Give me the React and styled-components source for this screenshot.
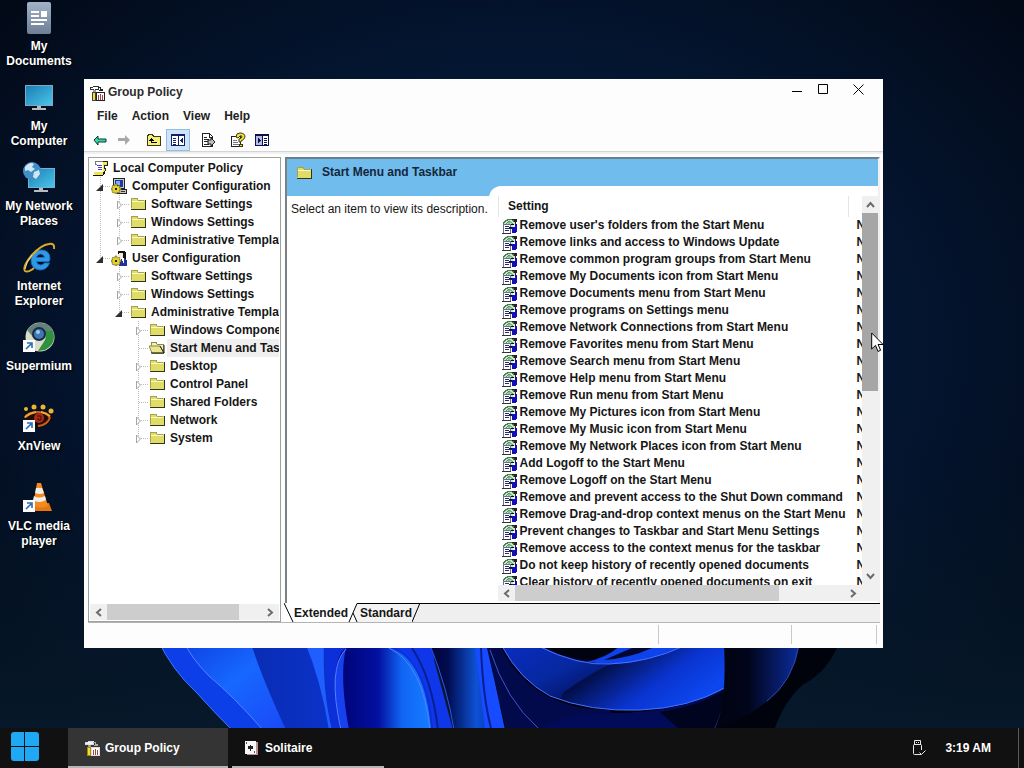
import React, { useState } from 'react'
import styled, { createGlobalStyle, css } from 'styled-components'

const BLUE = '#70bcec'

const GlobalStyle = createGlobalStyle`
  * {
    box-sizing: border-box;
  }
  body {
    margin: 0;
    background: #020b1c;
    color: #161616;
    font: bold 12px/15px "Liberation Sans", Arial, sans-serif;
    overflow: hidden;
  }
  button {
    margin: 0;
    padding: 0;
    border: 0;
    background: none;
    color: inherit;
    font: inherit;
  }
  svg {
    display: block;
    flex: none;
  }
`

const Screen = styled.div`
  position: relative;
  display: flex;
  flex-direction: column;
  height: 100vh;
`
const WallpaperSvg = styled.svg`
  position: absolute;
  inset: 0;
  width: 100%;
  height: 100%;
`
const Desktop = styled.main`
  position: relative;
  flex: 1;
  min-height: 0;
`
const Shortcuts = styled.nav`
  display: flex;
  flex-direction: column;
  width: 78px;
`
const Shortcut = styled.button`
  display: flex;
  flex-direction: column;
  align-items: center;
  gap: 5px;
  height: 80px;
  padding-top: 2px;
  color: #fff;
  text-align: center;
  text-shadow: 1px 1px 2px #000;
`

const Window = styled.section`
  position: absolute;
  left: 84px;
  top: 79px;
  right: 141px;
  bottom: 80px;
  display: flex;
  flex-direction: column;
  background: #fdfdfd;
`
const TitleBar = styled.header`
  display: flex;
  align-items: center;
  height: 25px;
  padding: 2px 7px 0 5px;
  gap: 3px;
  color: #2b2b2b;
  h1 {
    flex: 1;
    margin: 0;
    font: inherit;
  }
`
const Controls = styled.div`
  display: flex;
  margin-top: -6px;
`
const ControlButton = styled.button`
  display: flex;
  align-items: center;
  justify-content: center;
  width: ${(p) => (p.$wide ? 36 : 26)}px;
  height: 20px;
  margin-left: ${(p) => (p.$wide ? 4 : 0)}px;
`
const MenuBar = styled.nav`
  display: flex;
  gap: 14px;
  height: 24px;
  padding-left: 13px;
  color: #222;
`
const Toolbar = styled.div`
  display: flex;
  align-items: center;
  height: 24px;
  padding-left: 4px;
  border-bottom: 1px solid #d5d5d5;
`
const ToolButton = styled.button`
  display: flex;
  align-items: center;
  justify-content: center;
  width: 24px;
  height: 22px;
  margin-left: ${(p) => (p.$gap ? p.$gap : 0)}px;
  border: 1px solid ${(p) => (p.$on ? '#8fbfe8' : 'transparent')};
  background: ${(p) => (p.$on ? '#cde4f8' : 'none')};
`
const Panes = styled.div`
  display: grid;
  grid-template-columns: 193px 1fr;
  grid-template-rows: minmax(0, 1fr);
  gap: 4px;
  flex: 1;
  min-height: 0;
  padding: 5px 3px 0 4px;
  background: linear-gradient(#f0f0f0 2px, #fdfdfd 2px);
`
const TreePane = styled.div`
  display: flex;
  flex-direction: column;
  min-width: 0;
  padding: 1px;
  border: 1px solid #9aa39c;
  background: #fff;
`
const TreeList = styled.ul`
  flex: 1;
  min-height: 0;
  margin: 0;
  padding: 0 0 0 2px;
  overflow: hidden;
  list-style: none;
`
const TreeRow = styled.li`
  display: flex;
  align-items: center;
  height: 18px;
  white-space: nowrap;
`
const TreeLabel = styled.span`
  flex: 1 0 auto;
  margin-left: 2px;
  padding: 2px 0 1px 3px;
  background: ${(p) => (p.$selected ? '#efefef' : 'none')};
`
const Gutter = styled.span`
  flex: none;
  width: 19px;
  height: 18px;
`

const HBar = styled.div`
  display: flex;
  height: 16px;
  background: #f0f0f0;
`
const VBar = styled.div`
  display: flex;
  flex-direction: column;
  width: 16px;
  background: #f0f0f0;
`
const ScrollButton = styled.button`
  display: flex;
  align-items: center;
  justify-content: center;
  flex: none;
  width: ${(p) => (p.$vertical ? 16 : 17)}px;
  height: ${(p) => (p.$vertical ? 17 : 16)}px;
`
const Track = styled.div`
  flex: 1;
  min-height: 0;
`
const Thumb = styled.div`
  ${(p) =>
    p.$vertical
      ? css`
          height: ${p.$size}%;
          background: #a6a6a6;
        `
      : css`
          width: ${p.$size}%;
          height: 100%;
          background: #cdcdcd;
        `}
`

const RightPane = styled.div`
  display: flex;
  flex-direction: column;
  min-width: 0;
  min-height: 0;
`
const View = styled.div`
  display: flex;
  flex-direction: column;
  flex: 1;
  min-height: 0;
  border-top: 2px solid #697f90;
  border-left: 2px solid #7b7f86;
  border-right: 2px solid #f0f0f0;
`
const Banner = styled.div`
  display: flex;
  flex: none;
  align-items: center;
  gap: 10px;
  height: 27px;
  padding-left: 9px;
  background: ${BLUE};
  color: #14273c;
`
const Body = styled.div`
  display: grid;
  grid-template-columns: 202px 1fr;
  grid-template-rows: minmax(0, 1fr);
  flex: 1;
  min-height: 0;
  background: linear-gradient(${BLUE} 10px, #fff 10px);
`
const Description = styled.p`
  margin: 0;
  padding: 16px 0 0 4px;
  font-weight: normal;
  white-space: nowrap;
`
const ListPanel = styled.div`
  display: flex;
  flex-direction: column;
  min-width: 0;
  min-height: 0;
  padding: 10px 0 2px 9px;
  border-top-left-radius: 12px;
  background: #fff;
`
const ListArea = styled.div`
  display: flex;
  flex: 1;
  min-height: 0;
`
const ListClip = styled.div`
  flex: 1;
  min-width: 0;
  overflow: hidden;
`
const SettingsTable = styled.table`
  width: 440px;
  table-layout: fixed;
  border-collapse: collapse;
  white-space: nowrap;
  th {
    height: 21px;
    padding: 0 0 0 9px;
    border-left: 1px solid #e5e5e5;
    font-weight: bold;
    text-align: left;
  }
  th:first-child {
    width: 350px;
  }
  td {
    height: 17px;
    padding: 0 0 0 8px;
  }
  td:first-child {
    padding-left: 3px;
  }
`
const SettingName = styled.div`
  display: flex;
  align-items: center;
  gap: 2px;
  height: 17px;
`
const HBarRow = styled.div`
  display: flex;
  padding-right: 16px;
  background: #f0f0f0;
  > div {
    flex: 1;
  }
`
const TabBar = styled.div`
  display: flex;
  flex: none;
  height: 19px;
  margin-left: -1px;
  background: #fff;
`
const Tab = styled.button`
  height: 19px;
  border-top: 1px solid ${(p) => (p.$active ? '#fff' : '#000')};
  background: ${(p) => (p.$active ? '#fff' : '#f3f3f3')};
`
const TabFill = styled.div`
  flex: 1;
  height: 19px;
  border-top: 1px solid #000;
  background: #efefef;
`
const StatusBar = styled.footer`
  display: flex;
  flex: none;
  height: 26px;
  margin: 0 3px 0 4px;
  padding: 2px 3px 4px 0;
  border-top: 1px solid #b4b4b4;
`
const StatusCell = styled.div`
  flex: ${(p) => (p.$width ? 'none' : '1')};
  width: ${(p) => (p.$width ? p.$width + 'px' : 'auto')};
  border-right: 1px solid #c9c9c9;
`

const Taskbar = styled.footer`
  position: relative;
  display: flex;
  height: 40px;
  background: #111;
  color: #fff;
`
const StartButton = styled.button`
  width: 68px;
  padding: 0 0 3px 11px;
`
const Task = styled.button`
  display: flex;
  align-items: center;
  gap: 5px;
  width: ${(p) => (p.$active ? 160 : 152)}px;
  margin-right: 4px;
  padding-top: 2px;
  padding-left: ${(p) => (p.$active ? 16 : 12)}px;
  border-bottom: 2px solid #b5b5b5;
  background: ${(p) => (p.$active ? '#343434' : 'none')};
`
const Tray = styled.div`
  display: flex;
  align-items: center;
  gap: 19px;
  margin-left: auto;
  padding-right: 27px;
`
const ShowDesktop = styled.button`
  width: 6px;
  border-left: 1px solid #5a5a5a;
`
const PointerSvg = styled.svg`
  position: absolute;
  left: 871px;
  top: 332px;
`

// gutters: v = line, t = branch, e = last branch, blank = empty
// state: open | closed | none
const tree = [
  { label: 'Local Computer Policy', icon: 'scroll', gutters: '' },
  { label: 'Computer Configuration', icon: 'computer', gutters: 't', state: 'open' },
  { label: 'Software Settings', gutters: 'vt', state: 'closed' },
  { label: 'Windows Settings', gutters: 'vt', state: 'closed' },
  { label: 'Administrative Templates', gutters: 've', state: 'closed' },
  { label: 'User Configuration', icon: 'user', gutters: 'e', state: 'open' },
  { label: 'Software Settings', gutters: ' t', state: 'closed' },
  { label: 'Windows Settings', gutters: ' t', state: 'closed' },
  { label: 'Administrative Templates', gutters: ' e', state: 'open' },
  { label: 'Windows Components', gutters: '  t', state: 'closed' },
  { label: 'Start Menu and Taskbar', icon: 'openFolder', gutters: '  t' },
  { label: 'Desktop', gutters: '  t', state: 'closed' },
  { label: 'Control Panel', gutters: '  t', state: 'closed' },
  { label: 'Shared Folders', gutters: '  t' },
  { label: 'Network', gutters: '  t', state: 'closed' },
  { label: 'System', gutters: '  e', state: 'closed' },
]

const settings = [
  "Remove user's folders from the Start Menu",
  'Remove links and access to Windows Update',
  'Remove common program groups from Start Menu',
  'Remove My Documents icon from Start Menu',
  'Remove Documents menu from Start Menu',
  'Remove programs on Settings menu',
  'Remove Network Connections from Start Menu',
  'Remove Favorites menu from Start Menu',
  'Remove Search menu from Start Menu',
  'Remove Help menu from Start Menu',
  'Remove Run menu from Start Menu',
  'Remove My Pictures icon from Start Menu',
  'Remove My Music icon from Start Menu',
  'Remove My Network Places icon from Start Menu',
  'Add Logoff to the Start Menu',
  'Remove Logoff on the Start Menu',
  'Remove and prevent access to the Shut Down command',
  'Remove Drag-and-drop context menus on the Start Menu',
  'Prevent changes to Taskbar and Start Menu Settings',
  'Remove access to the context menus for the taskbar',
  'Do not keep history of recently opened documents',
  'Clear history of recently opened documents on exit',
]

const Icon16 = ({ children }) => (
  <svg width="16" height="16" viewBox="0 0 16 16" shapeRendering="crispEdges" aria-hidden="true">
    {children}
  </svg>
)

const FolderIcon = () => (
  <Icon16>
    <path d="M1 4l1-2h5l1 2h7v9H1z" fill="#e0dc68" />
    <path d="M1 12V4l1-2h5l1 2h6" fill="none" stroke="#a5a24a" />
    <path d="M2 5h12" stroke="#fbf9c4" />
    <path d="M15 4v9H1" fill="none" stroke="#33331a" />
  </Icon16>
)
const OpenFolderIcon = () => (
  <Icon16>
    <path d="M2 4l1-2h4l1 2h6v9H3z" fill="#f4f1b5" stroke="#8d8a45" />
    <path d="M0 6h11l4 7H3z" fill="#e9e590" stroke="#8d8a45" shapeRendering="auto" />
    <path d="M11 6l4 7V5M2 13h13" fill="none" stroke="#222" shapeRendering="auto" />
  </Icon16>
)
const ScrollIcon = () => (
  <Icon16>
    <path d="M4 2h9v3h-1v8H4z" fill="#fff" />
    <path d="M3 1h9M3 1v3h2" stroke="#777" fill="none" />
    <path d="M5 5h5M6 7h4M6 9h4" stroke="#4a3fc8" />
    <path d="M11 1h4v4h-3v3h1v3l-2 2" fill="#f1e53d" stroke="#222" />
    <path d="M12 2h2v2h-2zM11 6h1v6h-1z" fill="#f7ee4a" />
    <path d="M2 12h8l2 1-2 2H3z" fill="#f1e53d" />
    <path d="M1 15h10l2-3" fill="none" stroke="#111" />
  </Icon16>
)
const Gear = () => (
  <>
    <path
      d="M4 6h2v2h1l1-1 1 1-1 2h2v2H8l1 2-1 1-2-1v2H4v-2l-2 1-1-1 1-2H0v-2h2L1 8l1-1 2 1z"
      fill="#e8d62e"
      stroke="#4a430c"
      strokeWidth="0.500"
      shapeRendering="auto"
    />
    <path d="M4 10h2v2H4z" fill="#222" />
  </>
)
const ComputerIcon = () => (
  <Icon16>
    <path d="M2 0h12v11H2z" fill="#222" />
    <path d="M3 1h10v9H3z" fill="#cfcbc2" />
    <path d="M4 2h8v7H4z" fill="#1f36b0" />
    <path d="M5 3h4v4H5z" fill="#7eb0ee" />
    <path d="M5 11h11v5H5z" fill="#222" />
    <path d="M6 12h9v3H6z" fill="#c9c5bb" />
    <path d="M10 13h4v1h-4z" fill="#333" />
    <Gear />
  </Icon16>
)
const UserIcon = () => (
  <Icon16>
    <path d="M7 1h6l2 2v6h-3L7 6z" fill="#111" />
    <path d="M8 3h4v5H9L7 6z" fill="#f8ead2" />
    <path d="M10 9l4-1 2 3v5H8z" fill="#22319a" />
    <path d="M11 8h2v5h-1z" fill="#fff" />
    <Gear />
  </Icon16>
)
const PolicyIcon = () => (
  <Icon16>
    <path d="M4 1h7l3 3v5H2V3z" fill="#cfe6cd" />
    <path d="M1 6V4h1V3h1V2h2V1h5v1h1v1h1v1" fill="none" stroke="#52795a" />
    <path d="M10 1h4v1h-2v1h3M13 3v3" fill="none" stroke="#222" />
    <path d="M4 6l3-3 4 3M7 3v4" fill="none" stroke="#3e9b53" shapeRendering="auto" />
    <path d="M1 6h8v10H1z" fill="#6c7191" />
    <path d="M2 7h6v8H2z" fill="#fff" />
    <path d="M3 8h4v1H3zM3 10h5v1H3zM3 12h4v1H3z" fill="#262b6a" />
    <path d="M0 15h9v1H0z" fill="#333" />
    <path d="M8 9h3V8h2V6h2v8h-1v1h-4v-4H8z" fill="#1010b4" />
    <path d="M7 9h3v1H7zM9 6h3v1H9z" fill="#111" />
    <path d="M11 7h2v2h-2z" fill="#fff" />
  </Icon16>
)
const GroupPolicyIcon = ({ dark }) => (
  <Icon16>
    <path d="M1 2h3l1-1h4v3H6v1H4V4H1z" fill={dark ? '#f2f2f2' : '#fff'} stroke={dark ? '#ddd' : '#333'} />
    <path d="M9 2h2v2h2v1h-3" fill="none" stroke={dark ? '#aaa' : '#222'} />
    <path d="M4 5h3v4H4z" fill="#999" />
    <path d="M3 7h4v9H3z" fill={dark ? '#a08c10' : '#444'} />
    <path d="M4 8h2v7H4z" fill="#f4de2c" />
    <path d="M7 7h9v9H7z" fill={dark ? '#ddd' : '#222'} />
    <path d="M8 8h7v7H8z" fill="#fff" />
    <path d="M9 10h1v5H9zM11 9h1v6h-1zM13 10h1v5h-1z" fill="#a0453e" />
  </Icon16>
)

const treeIcons = {
  scroll: ScrollIcon,
  computer: ComputerIcon,
  user: UserIcon,
  openFolder: OpenFolderIcon,
}

const Branch = ({ type, state }) => (
  <Gutter>
    {type !== ' ' && (
      <svg width="19" height="18" viewBox="0 0 19 18" aria-hidden="true">
        <path d={`M8.500 0V${type === 'e' ? 9 : 18}`} stroke="#bdbdbd" strokeDasharray="1 1" />
        {type !== 'v' && <path d="M9 9.500H18" stroke="#bdbdbd" strokeDasharray="1 1" />}
        {state === 'open' && <path d="M11 7v7H4z" fill="#2f2f2f" />}
        {state === 'closed' && <path d="M6.500 6v8l4-4z" fill="#fff" stroke="#a5a5a5" />}
      </svg>
    )}
  </Gutter>
)

const Tree = () => {
  const [selected, setSelected] = useState(10)
  return (
    <TreeList>
      {tree.map((node, i) => {
        const NodeIcon = treeIcons[node.icon] || FolderIcon
        const last = node.gutters.length - 1
        return (
          <TreeRow key={i} onClick={() => setSelected(i)}>
            {node.gutters.split('').map((type, g) => (
              <Branch key={g} type={type} state={g === last ? node.state : ''} />
            ))}
            <NodeIcon />
            <TreeLabel $selected={selected === i}>{node.label}</TreeLabel>
          </TreeRow>
        )
      })}
    </TreeList>
  )
}

const arrows = {
  left: 'M7 1L3 4.500L7 8',
  right: 'M2 1L6 4.500L2 8',
  up: 'M1 7L4.500 3L8 7',
  down: 'M1 2L4.500 6L8 2',
}
const ScrollArrow = ({ dir }) => (
  <ScrollButton $vertical={dir === 'up' || dir === 'down'} aria-label={'Scroll ' + dir}>
    <svg width="9" height="9" viewBox="0 0 9 9">
      <path d={arrows[dir]} fill="none" stroke="#6b6b6b" strokeWidth="2" />
    </svg>
  </ScrollButton>
)
const HScroll = ({ size }) => (
  <HBar>
    <ScrollArrow dir="left" />
    <Track>
      <Thumb $size={size} />
    </Track>
    <ScrollArrow dir="right" />
  </HBar>
)

const Badge = () => (
  <>
    <path d="M0 18h12v12H0z" fill="#fbfbfb" />
    <path d="M3 27l5-5M4 21h5v5" fill="none" stroke="#2a6bb5" strokeWidth="1.600" />
  </>
)
const Icon32 = ({ children }) => (
  <svg width="32" height="32" viewBox="0 0 32 32" aria-hidden="true">
    {children}
  </svg>
)

const shortcuts = [
  {
    label: ['My', 'Documents'],
    art: (
      <>
        <rect x="4" y="0" width="24" height="32" rx="2" fill="url(#docFill)" />
        <path d="M8 10h8M8 14h8M8 18h16M8 22h13" stroke="#fff" strokeWidth="2" />
        <path d="M18 9h6v6h-6z" fill="#fff" />
      </>
    ),
  },
  {
    label: ['My', 'Computer'],
    art: (
      <>
        <path d="M2 3h28v21H2z" fill="#7fa9c0" />
        <path d="M3 4h26v19H3z" fill="url(#screenFill)" />
        <path d="M14 24h4v2h5v2H9v-2h5z" fill="#b6bcc2" />
      </>
    ),
  },
  {
    label: ['My Network', 'Places'],
    art: (
      <>
        <path d="M5 6h27v20H5z" fill="#6fb4d4" />
        <path d="M6 7h25v18H6z" fill="url(#screenFill)" />
        <path d="M16 26h4v2h5v2H11v-2h5z" fill="#b6bcc2" />
        <circle cx="9" cy="9" r="9" fill="#3f8fc6" />
        <path d="M2 5q5-6 9-3l-2 3 3 2-4 3-3-2-3 1zM11 10l5-2 1 4-4 5-3-2z" fill="#cfe7f2" />
      </>
    ),
  },
  {
    label: ['Internet', 'Explorer'],
    art: (
      <>
        <path
          d="M26 19.500H13.500Q14 23 17.500 23q2.500 0 4-2h5Q24 28 17 28q-9-1-9-10Q9 8 18 8q9 0 9 9zM13.500 15.500h8Q21 12 17.500 12t-4 3.500z"
          fill="#2e9ae6"
          stroke="#1a6ec4"
        />
        <path d="M31 7Q32 1 26 2 18 3 9 13-1 25 2 29q3 2 9-3" fill="none" stroke="#d9a92a" strokeWidth="2" />
        <path d="M9 13Q3 20 2 27" fill="none" stroke="#f6e08a" />
      </>
    ),
  },
  {
    label: ['Supermium'],
    art: (
      <>
        <circle cx="17" cy="15" r="14.500" fill="#dcdccd" />
        <path d="M4 8Q10 0 18 1q9 0 12 8l-13 1q-5 0-7 5z" fill="#648279" />
        <path d="M30 9q4 13-8 19l-7 1 7-11q2-5-2-9z" fill="#2f913c" />
        <path d="M4 8l6 9q3 5 8 4l-4 8Q3 27 3 16z" fill="#d9dfc7" />
        <circle cx="16" cy="12" r="7" fill="#1a2b45" />
        <circle cx="16" cy="12" r="5" fill="#3d79b5" />
        <circle cx="15" cy="10" r="2" fill="#a4cbe8" />
        <Badge />
      </>
    ),
  },
  {
    label: ['XnView'],
    art: (
      <>
        <g fill="#eeb52e">
          <circle cx="3" cy="7" r="2" />
          <circle cx="11" cy="5" r="2.500" />
          <circle cx="20" cy="5" r="2.500" />
          <circle cx="28" cy="9" r="2.500" />
        </g>
        <path d="M3 15q13-9 26 0-4 10-14 10Q7 24 3 15z" fill="#260a05" />
        <path d="M2 16q2-6 13-6 9 0 12 6M27 15q-2 8-12 9" fill="none" stroke="#ce5f19" strokeWidth="2" />
        <path d="M2 15q5-4 11-5M18 10q5 1 9 4" fill="none" stroke="#f3a42c" strokeWidth="2" />
        <circle cx="16" cy="16" r="5" fill="#a82c1a" />
        <path d="M14 14h4v4h-3v-2" fill="none" stroke="#3b0c07" />
        <Badge />
      </>
    ),
  },
  {
    label: ['VLC media', 'player'],
    art: (
      <>
        <path d="M7 22l19-1 3 8H9z" fill="#e8760f" />
        <path d="M14 1h4l7 23q-8 4-15-1z" fill="#f48a1c" />
        <path d="M13 6h6l2 5q-4 2-9 0zM11 14q5 3 11 0l1 4q-7 4-13 0z" fill="#f0efec" />
        <Badge />
      </>
    ),
  },
]

const Wallpaper = () => (
  <WallpaperSvg viewBox="0 0 1024 768" preserveAspectRatio="xMidYMax slice" aria-hidden="true">
    <defs>
      <radialGradient id="sky" cx="0.500" cy="0.450" r="0.650">
        <stop offset="0" stopColor="#0a2143" />
        <stop offset="0.600" stopColor="#041530" />
        <stop offset="1" stopColor="#020a18" />
      </radialGradient>
      <linearGradient id="ground" x1="0" y1="0" x2="0" y2="1">
        <stop offset="0.600" stopColor="#071a2c" stopOpacity="0" />
        <stop offset="1" stopColor="#071a2c" />
      </linearGradient>
      <linearGradient id="docFill" x1="0" y1="0" x2="0" y2="1">
        <stop offset="0" stopColor="#a3b3c6" />
        <stop offset="1" stopColor="#6e7f96" />
      </linearGradient>
      <linearGradient id="screenFill" x1="0" y1="0" x2="1" y2="1">
        <stop offset="0" stopColor="#1a7fb5" />
        <stop offset="1" stopColor="#4cc3ea" />
      </linearGradient>
      <linearGradient id="petalA" x1="0" y1="0" x2="1" y2="0.600">
        <stop offset="0" stopColor="#0b37dc" />
        <stop offset="0.500" stopColor="#1767ff" />
        <stop offset="1" stopColor="#1b46f5" />
      </linearGradient>
      <linearGradient id="petalB" x1="0" y1="0" x2="1" y2="0">
        <stop offset="0" stopColor="#0a2cb4" />
        <stop offset="1" stopColor="#0b34cc" />
      </linearGradient>
      <linearGradient id="loop" x1="0" y1="0" x2="1" y2="0">
        <stop offset="0.100" stopColor="#00057c" />
        <stop offset="0.450" stopColor="#0310a0" />
        <stop offset="0.700" stopColor="#1166f4" />
        <stop offset="1" stopColor="#157cff" />
      </linearGradient>
      <linearGradient id="shade" x1="0" y1="0" x2="1" y2="0">
        <stop offset="0" stopColor="#02043a" />
        <stop offset="0.300" stopColor="#020b4e" />
        <stop offset="0.800" stopColor="#0d52d4" />
        <stop offset="1" stopColor="#0a3cc0" />
      </linearGradient>
      <linearGradient id="sweep" x1="0" y1="0" x2="1" y2="0.300">
        <stop offset="0" stopColor="#000530" />
        <stop offset="0.350" stopColor="#010628" />
        <stop offset="0.650" stopColor="#0a34d0" />
        <stop offset="0.850" stopColor="#0c48f0" />
        <stop offset="1" stopColor="#0525a8" />
      </linearGradient>
      <linearGradient id="rim" x1="0" y1="0" x2="1" y2="1">
        <stop offset="0" stopColor="#0a2cc0" />
        <stop offset="0.500" stopColor="#0628a0" />
        <stop offset="1" stopColor="#030a48" />
      </linearGradient>
      <linearGradient id="tail" x1="0" y1="0" x2="1" y2="0">
        <stop offset="0" stopColor="#01030f" />
        <stop offset="0.400" stopColor="#01051c" />
        <stop offset="1" stopColor="#0b2c9c" />
      </linearGradient>
    </defs>
    <path d="M0 0h1024v768H0z" fill="url(#sky)" />
    <path d="M0 0h1024v768H0z" fill="url(#ground)" />
    <path d="M500 640h340q-10 30-36 44-18 14-30 46H500z" fill="#01030c" />
    <path d="M158 640q14 30 38 52 18 20 36 38h110V640z" fill="url(#petalA)" />
    <path d="M158 640q14 30 38 52 18 20 36 38h31q-30-34-54-54-18-18-26-36z" fill="#0c3fe8" />
    <path d="M183 640q8 18 26 36 24 20 54 54" fill="none" stroke="#4c86ff" />
    <path d="M158 640q14 30 38 52 18 20 36 38" fill="none" stroke="#3f74ff" />
    <path d="M250 640q10 34 36 90h60V640z" fill="url(#petalB)" />
    <path d="M304 640h20q-2 50 8 90h-3q-8-50-25-90z" fill="#1f5fff" />
    <path d="M324 640h110v90H332q-6-40-8-90z" fill="#0b2fd8" />
    <path d="M348 730q-18-42-11-66 3-14 10-16h44q34 12 40 82z" fill="url(#loop)" />
    <path d="M346 648q-7 28 3 82h-7q-16-60 4-82z" fill="#1740ee" />
    <path d="M341 730q-14-62 5-81M389 648q34 16 41 82" fill="none" stroke="#5580ff" />
    <path d="M392 645h38l23 85h-20q-4-66-41-85z" fill="#0f36e8" />
    <path d="M412 648q20 30 26 82" fill="none" stroke="#062094" strokeWidth="2" />
    <path d="M430 645h50l8 85h-34q-6-40-24-85z" fill="url(#shade)" />
    <path d="M430 645q18 45 24 85" fill="none" stroke="#2a55e8" />
    <path d="M475 645h12l18 85h-20z" fill="#174bff" />
    <path d="M481 648q2 50 10 80" fill="none" stroke="#0a1f8f" strokeWidth="2" />
    <path d="M487 648h14q32 62 110 62v20H506z" fill="#020a4c" />
    <path d="M490 650q16 50 48 78" fill="none" stroke="#3d55c8" />
    <path d="M500 645q20 34 50 51 40 16 90 14 50-2 86-22l70-43z" fill="url(#sweep)" />
    <path d="M502 645h38q30 18 70 19-20 10-46 28l-4 8q-40-15-58-55z" fill="url(#rim)" />
    <path d="M545 648q30 14 62 12l24-12z" fill="#010310" />
    <path d="M586 662q20-4 34-16h64q-40 18-74 18z" fill="#0e43ec" />
    <path d="M604 660q26-2 48-12h-20z" fill="#01072e" />
    <path d="M502 646q18 34 48 50 40 16 90 14 50-2 84-22M538 646q40 20 72 18 40-2 74-18" fill="none" stroke="#4a6fff" />
    <path d="M540 730q20-16 70-17 70 0 116-24-4 26-12 41z" fill="#020b58" />
    <path d="M660 712q40-6 64-22 2 20-10 40h-34z" fill="#01041e" />
    <path d="M726 688q-2 22-12 42" fill="none" stroke="#2844b4" />
    <path d="M724 645h75q-6 36-32 56-20 18-52 27 12-24 9-83z" fill="url(#tail)" />
    <path d="M799 645q-6 36-32 56" fill="none" stroke="#3248b0" />
  </WallpaperSvg>
)

const App = () => {
  const [tab, setTab] = useState('Extended')
  return (
    <Screen>
      <GlobalStyle />
      <Wallpaper />
      <Desktop>
        <Shortcuts>
          {shortcuts.map((s) => (
            <Shortcut key={s.label.join(' ')}>
              <Icon32>{s.art}</Icon32>
              <span>
                {s.label[0]}
                {s.label[1] && <br />}
                {s.label[1]}
              </span>
            </Shortcut>
          ))}
        </Shortcuts>
        <Window>
          <TitleBar>
            <GroupPolicyIcon />
            <h1>Group Policy</h1>
            <Controls>
              <ControlButton aria-label="Minimize">
                <svg width="11" height="11" viewBox="0 0 11 11">
                  <path d="M0 7.500h10" stroke="#000" />
                </svg>
              </ControlButton>
              <ControlButton aria-label="Maximize">
                <svg width="11" height="11" viewBox="0 0 11 11">
                  <path d="M.500 .500h9v9h-9z" fill="none" stroke="#000" />
                </svg>
              </ControlButton>
              <ControlButton $wide aria-label="Close">
                <svg width="11" height="11" viewBox="0 0 11 11">
                  <path d="M.500 .500l10 10M10.500 .500l-10 10" stroke="#000" />
                </svg>
              </ControlButton>
            </Controls>
          </TitleBar>
          <MenuBar>
            {['File', 'Action', 'View', 'Help'].map((m) => (
              <button key={m}>{m}</button>
            ))}
          </MenuBar>
          <Toolbar>
            <ToolButton aria-label="Back">
              <Icon16>
                <path d="M2 8l4-4v3h8v3H6v3z" fill="#35d6a0" stroke="#0b3b36" shapeRendering="auto" />
              </Icon16>
            </ToolButton>
            <ToolButton aria-label="Forward">
              <Icon16>
                <path d="M14 8l-5-5v3H2v3h7v4z" fill="#a8a8a8" shapeRendering="auto" />
              </Icon16>
            </ToolButton>
            <ToolButton $gap={6} aria-label="Up one level">
              <Icon16>
                <path d="M1.500 4.500l1-2h4l1 2h7v9h-13z" fill="#f5f078" stroke="#3c3a12" />
                <path d="M5 10h6v1H5zM5 6h1v5H5zM4 7h3v1H4zM3 8h5v1H3z" fill="#000" />
              </Icon16>
            </ToolButton>
            <ToolButton $on aria-label="Show tree">
              <Icon16>
                <path d="M1.500 2.500h13v11h-13z" fill="#fff" stroke="#10206a" />
                <path d="M1 3h14" stroke="#10206a" strokeWidth="2" />
                <path d="M8 3v11" stroke="#10206a" />
                <path d="M3 6h3M3 8h3M3 10h3M3 12h3" stroke="#10206a" />
                <path d="M13 6v5l-3-2.500z" fill="#10206a" />
              </Icon16>
            </ToolButton>
            <ToolButton $gap={6} aria-label="Export list">
              <Icon16>
                <path d="M2.500 1.500h7l3 3v10h-10z" fill="#fff" stroke="#222" />
                <path d="M9 1v4h4M4 5h3M4 7h5M4 9h4M4 12h5" fill="none" stroke="#222" />
                <path d="M8 8h3V6l4 4-4 4v-2H8z" fill="#bbb" stroke="#222" shapeRendering="auto" />
              </Icon16>
            </ToolButton>
            <ToolButton $gap={6} aria-label="Help">
              <Icon16>
                <path d="M1.500 4.500h9v10h-9z" fill="#fff" stroke="#222" />
                <path d="M3 8h4M3 10h5M3 12h6" stroke="#777" />
                <path d="M6 5q0-4 4-4 5 0 5 4-1 3-4 4v1H9V7q3-1 3-2 0-2-2-1L8 6z" fill="#f2e53c" stroke="#3b370c" shapeRendering="auto" />
                <path d="M9 12h3v2H9z" fill="#f2e53c" stroke="#3b370c" />
              </Icon16>
            </ToolButton>
            <ToolButton aria-label="Show action pane">
              <Icon16>
                <path d="M1.500 2.500h13v11h-13z" fill="#fff" stroke="#10104a" />
                <path d="M1 3h14" stroke="#10104a" strokeWidth="2" />
                <path d="M2 4h6v9H2z" fill="#b4bce4" />
                <path d="M8 3v11M10 6h3M10 8h3M10 10h3M10 12h3" stroke="#10104a" />
                <path d="M4 6v5l3-2.500z" fill="#10104a" />
              </Icon16>
            </ToolButton>
          </Toolbar>
          <Panes>
            <TreePane>
              <Tree />
              <HScroll size={85} />
            </TreePane>
            <RightPane>
              <View>
                <Banner>
                  <FolderIcon />
                  Start Menu and Taskbar
                </Banner>
                <Body>
                  <Description>Select an item to view its description.</Description>
                  <ListPanel>
                    <ListArea>
                      <ListClip>
                        <SettingsTable>
                          <thead>
                            <tr>
                              <th scope="col">Setting</th>
                              <th scope="col" />
                            </tr>
                          </thead>
                          <tbody>
                            {settings.map((name) => (
                              <tr key={name}>
                                <td>
                                  <SettingName>
                                    <PolicyIcon />
                                    {name}
                                  </SettingName>
                                </td>
                                <td>Not configured</td>
                              </tr>
                            ))}
                          </tbody>
                        </SettingsTable>
                      </ListClip>
                      <VBar>
                        <ScrollArrow dir="up" />
                        <Track>
                          <Thumb $vertical $size={50} />
                        </Track>
                        <ScrollArrow dir="down" />
                      </VBar>
                    </ListArea>
                    <HBarRow>
                      <HScroll size={80} />
                    </HBarRow>
                  </ListPanel>
                </Body>
              </View>
              <TabBar>
                <svg width="10" height="19" viewBox="0 0 10 19">
                  <path d="M0 0l9 19" stroke="#000" />
                </svg>
                <Tab $active={tab === 'Extended'} onClick={() => setTab('Extended')}>
                  Extended
                </Tab>
                <svg width="12" height="19" viewBox="0 0 12 19">
                  <path d="M9.500 0H12v19H8.500L5 10z" fill="#f3f3f3" />
                  <path d="M1 19L9 .500H12M5 10l4 9" fill="none" stroke="#000" />
                </svg>
                <Tab $active={tab === 'Standard'} onClick={() => setTab('Standard')}>
                  Standard
                </Tab>
                <svg width="9" height="19" viewBox="0 0 9 19">
                  <path d="M0 0h9v19H0z" fill="#efefef" />
                  <path d="M0 .500h9M0 19L8 0" stroke="#000" />
                </svg>
                <TabFill />
              </TabBar>
            </RightPane>
          </Panes>
          <StatusBar>
            <StatusCell />
            <StatusCell $width={133} />
            <StatusCell $width={85} />
          </StatusBar>
        </Window>
      </Desktop>
      <Taskbar>
        <StartButton aria-label="Start">
          <svg width="28" height="29" viewBox="0 0 28 29">
            <path d="M3 0h10v14H0V3q0-3 3-3zM14 0h11q3 0 3 3v11H14zM0 15h13v14H3q-3 0-3-3zM14 15h14v11q0 3-3 3H14z" fill="#1fa9f4" />
          </svg>
        </StartButton>
        <Task $active>
          <GroupPolicyIcon dark />
          Group Policy
        </Task>
        <Task>
          <Icon16>
            <path d="M3 2h11v13H3z" fill="#b98f92" />
            <path d="M1 1h11v13H1z" fill="#f7f7f7" />
            <path d="M6 5h1v1h2v3H7v2H6V9H4V6h2z" fill="#222" />
            <path d="M2 2h1v2H2zM10 11h1v2h-1z" fill="#a33" />
          </Icon16>
          Solitaire
        </Task>
        <Tray>
          <svg width="14" height="16" viewBox="0 0 14 16" fill="none" stroke="#e8e8e8">
            <path d="M2.500 5V.500h6V5M9 14.500H2.500q-1 0-1-1v-8q0-1 1-1h6q1 0 1 1V10M4 2.500h1M6 2.500h1M7.500 12.500l2 2 4-4" />
          </svg>
          <span>3:19 AM</span>
        </Tray>
        <ShowDesktop aria-label="Show desktop" />
      </Taskbar>
      <PointerSvg width="13" height="21" viewBox="0 0 13 21" aria-hidden="true">
        <path d="M.700 1v16l3.800-3.600 2.500 6 2.600-1.100-2.500-5.800h5z" fill="#fff" stroke="#000" />
      </PointerSvg>
    </Screen>
  )
}

export default App
